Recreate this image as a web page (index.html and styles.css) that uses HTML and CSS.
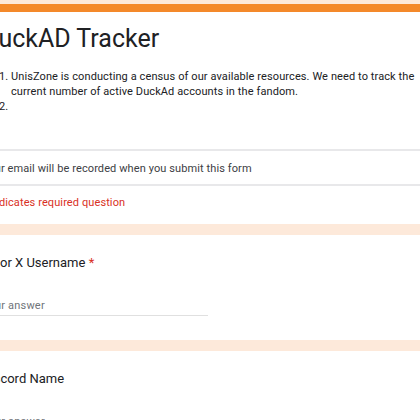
FILE: index.html
```html
<!DOCTYPE html>
<html lang="en">
<head>
<meta charset="utf-8">
<title>DuckAD Tracker</title>
<link rel="stylesheet" href="styles.css">
</head>
<body>
<main class="page">
  <section class="card card-head">
    <div class="head-main">
      <h1 class="form-title">DuckAD Tracker</h1>
      <ol class="form-desc">
        <li>UnisZone is conducting a census of our available resources. We need to track the current number of active DuckAd accounts in the fandom.</li>
        <li></li>
      </ol>
    </div>
    <div class="notice">Your email will be recorded when you submit this form</div>
    <div class="notice required-note">* Indicates required question</div>
  </section>

  <section class="card question">
    <div class="q-title q-title-cut">or X Username <span class="star">*</span></div>
    <div class="answer">Your answer</div>
  </section>

  <section class="card question">
    <div class="q-title">Discord Name</div>
    <div class="answer">Your answer</div>
  </section>
</main>
</body>
</html>
```
FILE: styles.css
```css
html, body {
  margin: 0;
  padding: 0;
  background: #fde9da;
  overflow: hidden;
  height: 420px;
}

body {
  font-family: Roboto, "Liberation Sans", Arial, sans-serif;
  color: #202124;
}

.page {
  margin-left: -18px;
  width: 452px;
  padding-top: 4px;
  display: flex;
  flex-direction: column;
  gap: 11px;
}

.card {
  background: #ffffff;
}

.card-head {
  border-top: 8px solid #f4892a;
}

.head-main {
  padding-top: 12px;
  padding-bottom: 35px;
}

.form-title {
  margin: 0;
  font-size: 25px;
  line-height: 30px;
  font-weight: 400;
  color: #202124;
}

.form-desc {
  margin: 15px 0 0 0;
  padding-left: 29px;
  font-size: 11px;
  line-height: 15px;
  letter-spacing: 0.1px;
  min-height: 45px;
}

.form-desc li {
  min-height: 15px;
}

.notice {
  border-top: 2px solid #e8e8ea;
  font-size: 11px;
  line-height: 16px;
  letter-spacing: 0.1px;
  padding: 10px 0 7px 0;
  color: #3c4043;
}

.required-note {
  color: #d93025;
  padding-top: 9px;
  padding-bottom: 13px;
}

.question {
  padding-top: 16px;
  padding-bottom: 24px;
}

.q-title {
  font-size: 13px;
  line-height: 24px;
  color: #202124;
}

.q-title-cut {
  padding-left: 18px;
}

.star {
  color: #d93025;
}

.answer {
  margin-top: 23px;
  width: 226px;
  font-size: 11px;
  line-height: 16px;
  letter-spacing: 0.2px;
  color: #70757a;
  padding-bottom: 1px;
  border-bottom: 1px solid #e0e0e0;
}
```
